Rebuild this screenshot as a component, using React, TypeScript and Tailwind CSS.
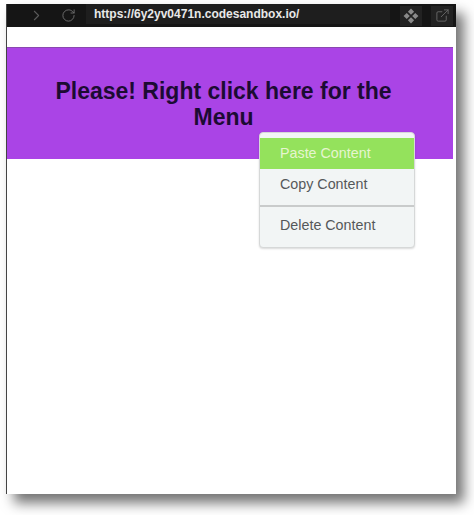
import { RotateCw, ChevronRight, ExternalLink } from "lucide-react";

export default function App() {
  return (
    <div className="w-[474px] h-[515px] bg-white overflow-hidden pl-[6px] pt-[4px] font-['Liberation_Sans',sans-serif]">
      <div className="relative w-[450px] h-[490px] bg-white border-l border-l-[#444] shadow-[8px_9px_12px_rgba(0,0,0,0.55)] flex flex-col">
        <div className="h-[23px] bg-[#151515] flex items-center shrink-0">
          <ChevronRight className="ml-[21px] text-[#5a5a5a]" size={17} strokeWidth={1.5} />
          <RotateCw className="ml-[16px] text-[#6e6e6e]" size={15} strokeWidth={1.5} />
          <div className="ml-[10px] w-[304px] h-[20px] -mt-[3px] bg-[#1e1e1e] pl-[8px] text-[#e8e8e8] text-[12px] font-bold leading-[20px]">
            https://6y2yv0471n.codesandbox.io/
          </div>
          <div className="ml-[10px] w-[22px] h-[20px] bg-[#222] flex items-center justify-center">
            <svg width="16" height="16" viewBox="0 0 16 16" fill="#8a8a8a">
              <rect x="5.8" y="1.5" width="4.4" height="4.4" transform="rotate(45 8 3.7)" />
              <rect x="1.5" y="5.8" width="4.4" height="4.4" transform="rotate(45 3.7 8)" />
              <rect x="10.1" y="5.8" width="4.4" height="4.4" transform="rotate(45 12.3 8)" />
              <rect x="5.8" y="10.1" width="4.4" height="4.4" transform="rotate(45 8 12.3)" />
            </svg>
          </div>
          <div className="ml-[9px] w-[22px] h-[20px] bg-[#222] flex items-center justify-center">
            <ExternalLink className="text-[#666]" size={15} strokeWidth={1.5} />
          </div>
        </div>
        <div className="mt-[20px] w-[446px] h-[112px] bg-[#aa44e6] border-t border-t-[#8a48b0] flex items-center justify-center pl-[40px] pr-[53px] text-center text-[23px] leading-[26px] font-bold text-[#1c0b33]">
          Please! Right click here for the Menu
        </div>
        <div className="absolute left-[252px] top-[128px] w-[156px] h-[116px] bg-[#f2f5f5] border border-[#d6d8d8] rounded-[4px] pt-[5px] text-[14.3px] text-[#55585a] shadow-[0_1px_2px_rgba(0,0,0,0.15)]">
          <div className="h-[31px] bg-[#94e25c] text-[#e6f5cf] pl-[20px] leading-[30px]">Paste Content</div>
          <div className="h-[36px] pl-[20px] leading-[30px] bg-[#f2f5f5]">Copy Content</div>
          <div className="h-[2px] bg-[#c9cbcb]" />
          <div className="pl-[20px] pt-[4px] leading-[28px]">Delete Content</div>
        </div>
      </div>
    </div>
  );
}
